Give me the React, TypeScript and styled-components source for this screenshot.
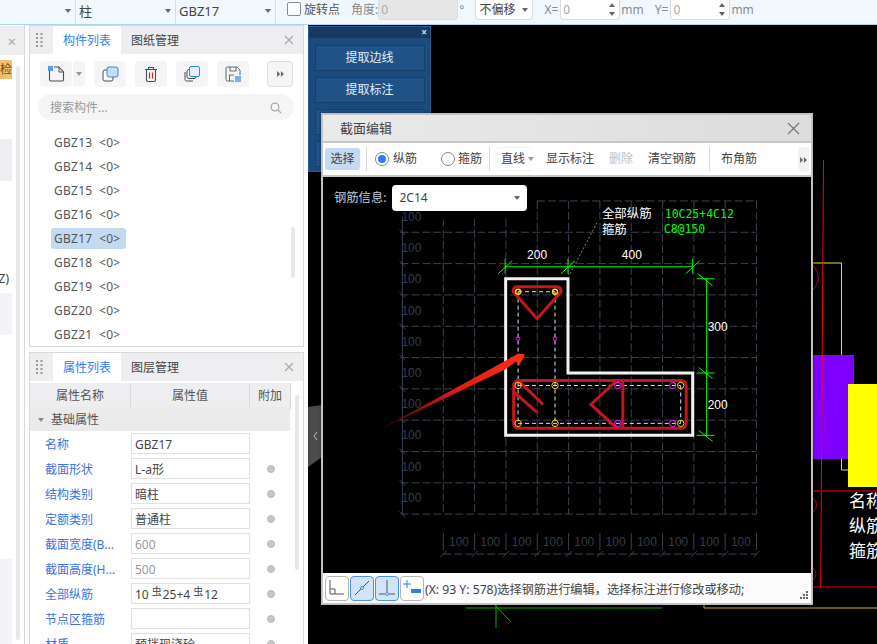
import React from "react";
import styled, { createGlobalStyle } from "styled-components";

const FONT = `"Noto Sans", "Noto Sans CJK SC", sans-serif`;

const Global = createGlobalStyle`
  html, body { margin: 0; padding: 0; background: #fff; overflow: hidden; }
  * { box-sizing: border-box; }
  body { font: 12px/16px ${FONT}; color: #333; }
`;

const Page = styled.div`
  width: 877px; height: 644px; display: flex; flex-direction: column; overflow: hidden;
`;

/* ---------- top bar ---------- */
const TopBar = styled.div`
  height: 25px; flex: none; display: flex; align-items: flex-start; background: #f0f8fd;
  border-bottom: 1px solid #acd4f4; color: #666;
`;
const TopSelect = styled.div<{ $w: number }>`
  width: ${(p) => p.$w}px; height: 24px; display: flex; align-items: center; justify-content: space-between;
  padding: 0 4px 3px 3px; border-right: 1px solid #d5dde3; color: #444; font-size: 13px;
`;
const Caret = styled.i<{ $c?: string }>`
  display: block; width: 0; height: 0; border-left: 3px solid transparent; border-right: 3px solid transparent;
  border-top: 4px solid ${(p) => p.$c || "#666"}; flex: none;
`;
const CheckBox = styled.span`
  width: 14px; height: 14px; margin: 2px 0 0 11px; border: 1px solid #8a8a8a; border-radius: 2px; background: #fff; flex: none;
`;
const TopLabel = styled.span<{ $ml: number; $c?: string }>`
  margin-left: ${(p) => p.$ml}px; line-height: 20px; font-size: 12px; white-space: nowrap; color: ${(p) => p.$c || "#8a8a8a"};
`;
const TopInput = styled.div<{ $w: number; $ml: number; $off?: boolean }>`
  width: ${(p) => p.$w}px; height: 20px; margin-left: ${(p) => p.$ml}px; padding-left: 2px; line-height: 18px; color: #aaa;
  background: ${(p) => (p.$off ? "#e6e6e6" : "#fff")}; border: 1px solid #d8dde2; border-top: 0; border-radius: 0 0 4px 4px;
  display: flex; justify-content: space-between; align-items: center; flex: none; font-size: 12px;
`;
const Spin = styled.span`
  display: flex; flex-direction: column; gap: 5px; margin-right: 4px;
  i:first-child { transform: rotate(180deg); }
`;
const OffsetBox = styled(TopInput)`
  color: #444; padding: 0 4px 0 3px; font-size: 12px;
`;

/* ---------- workspace ---------- */
const Workspace = styled.div`
  flex: 1; display: flex; gap: 4px; min-height: 0;
`;
const Stub = styled.aside`
  width: 25px; flex: none; border-right: 1px solid #d9d9d9; display: flex; flex-direction: column; overflow: hidden; position: relative;
`;
const StubHead = styled.div`
  height: 29px; margin-top: 1px; background: #eeeef0; color: #aaa; font-size: 15px; display: flex; align-items: center; justify-content: flex-end; padding-right: 8px; flex: none;
`;
const StubBand = styled.div<{ $h: number; $mt: number; $bg?: string }>`
  width: 12px; height: ${(p) => p.$h}px; margin-top: ${(p) => p.$mt}px; background: ${(p) => p.$bg || "#f3f4f7"}; flex: none;
  font-size: 12px; line-height: ${(p) => p.$h}px; color: #6b4a10; overflow: hidden; white-space: nowrap; direction: rtl;
`;
const StubZ = styled.div`
  height: 16px; margin-top: 90px; color: #444; font-size: 12px; width: 9px; flex: none; line-height: 16px; white-space: nowrap;
  display: flex; justify-content: flex-end;
`;
const StubScroll = styled.div`
  position: absolute; left: 16px; top: 41px; bottom: 4px; width: 4px; border-radius: 2px; background: #e8e8e8;
`;

const Side = styled.div`
  width: 275px; flex: none; display: flex; flex-direction: column; gap: 5px;
`;
const Panel = styled.section<{ $h?: number }>`
  border: 1px solid #d9d9d9; display: flex; flex-direction: column; position: relative; overflow: hidden;
  ${(p) => (p.$h ? `height:${p.$h}px;flex:none;` : "flex:1;border-bottom:0;")}
`;
const TabBar = styled.div`
  height: 28px; flex: none; background: #eeeef0; display: flex; align-items: stretch; padding-left: 6px; position: relative;
`;
const Tab = styled.div<{ $on?: boolean }>`
  width: 68px; text-align: center; padding-top: 1px; line-height: 28px; font-size: 12px; background: ${(p) => (p.$on ? "#fff" : "transparent")};
  color: ${(p) => (p.$on ? "#2f7ff0" : "#444")};
`;
const Grip = styled.svg`
  width: 7px; height: 15px; margin: 7px 10px 0 0; flex: none;
`;
const CloseX = styled.svg`
  position: absolute; right: 9px; top: 9px; width: 10px; height: 10px;
`;
const Tools = styled.div`
  height: 26px; margin: 7px 0 0 10px; display: flex; align-items: stretch; flex: none;
`;
const ToolBtn = styled.div<{ $w: number; $ml: number; $border?: boolean }>`
  width: ${(p) => p.$w}px; margin-left: ${(p) => p.$ml}px; background: #f5f5f5; border-radius: 4px; display: flex; align-items: center; justify-content: center;
  ${(p) => (p.$border ? "border:1px solid #dedede;" : "")}
`;
const Search = styled.div`
  height: 26px; margin: 7px 9px 0 8px; border-radius: 13px; background: #f5f5f5; color: #999; display: flex; align-items: center; justify-content: space-between;
  padding: 1px 12px 0; font-size: 12px; flex: none;
`;
const List = styled.div`
  margin-top: 10px; display: flex; flex-direction: column; align-items: flex-start; padding-left: 21px; position: relative; flex: 1;
`;
const Item = styled.div<{ $on?: boolean }>`
  height: 24px; display: flex; align-items: center;
  span { display: block; height: 21px; line-height: 21px; padding: 0 6px 0 3px; border-radius: 3px; background: ${(p) => (p.$on ? "#c4daf2" : "transparent")}; color: #555; font-size: 12px; white-space: pre; letter-spacing: .25px; }
`;
const VBar = styled.div<{ $top: number; $h: number; $right: number }>`
  position: absolute; top: ${(p) => p.$top}px; right: ${(p) => p.$right}px; height: ${(p) => p.$h}px; width: 4px; border-radius: 2px; background: #e8e8e8;
`;
const GridHead = styled.div`
  display: grid; grid-template-columns: 101px 119px 41px; height: 24px; margin-top: 2px; flex: none;
`;
const HeadCell = styled.div`
  background: #eeeef0; border-right: 1px solid #d9d9d9; border-bottom: 1px solid #d9d9d9; text-align: center; line-height: 25px; color: #555;
`;
const Group = styled.div`
  width: 260px; height: 24px; background: #ebebeb; display: flex; align-items: center; padding: 2px 0 0 8px; gap: 7px; color: #555; flex: none;
`;
const Row = styled.div`
  display: grid; grid-template-columns: 101px 119px 1fr; height: 25px; align-items: center; flex: none;
  &:first-of-type { margin-top: 1px; }
`;
const RowLabel = styled.div`
  padding: 2px 0 0 15px; color: #3b72e6; white-space: nowrap; overflow: hidden;
`;
const RowValue = styled.div<{ $dim?: boolean }>`
  height: 21px; border: 1px solid #e0e0e0; line-height: 19px; padding: 1px 0 0 3px; color: ${(p) => (p.$dim ? "#9a9a9a" : "#444")}; font-size: 12px; white-space: nowrap;
  sup { font-size: 10px; line-height: 0; vertical-align: 4px; margin: 0 1px 0 3px; }
`;
const Dot = styled.i`
  display: block; width: 8px; height: 8px; margin-left: 17px; border-radius: 50%; background: #c6c6c6; border: 1px solid #bbb;
`;

/* ---------- canvas ---------- */
const Canvas = styled.main`
  flex: 1; background: #000; position: relative; overflow: hidden;
`;
const Backdrop = styled.svg`
  position: absolute; inset: 0; width: 100%; height: 100%;
`;
const BluePanel = styled.div`
  position: absolute; left: 0; top: 1px; width: 123px; height: 146px; background: #1b4a7c; border: 1px solid #27598f; display: flex; flex-direction: column; align-items: center; gap: 6px;
`;
const BlueHead = styled.div`
  align-self: stretch; height: 11px; background: #17385f; color: #cfe0f0; font-size: 10px; line-height: 10px; text-align: right; padding-right: 3px; margin-bottom: 1px; font-weight: 700;
`;
const BlueBtn = styled.div`
  width: 110px; height: 26px; background: #1f5287; border: 1px solid #163f6c; color: #e6edf5; text-align: center; line-height: 24px; font-size: 12px; flex: none;
`;
const Handle = styled.svg`
  position: absolute; left: 0; top: 380px; width: 14px; height: 62px;
`;
const Dialog = styled.div`
  position: absolute; left: 13px; top: 88px; width: 492px; height: 492px; background: #c6c6c6; border: 1px solid #bdbdbd; padding: 1px;
  display: flex; flex-direction: column; box-shadow: 0 0 3px rgba(0,0,0,.4);
`;
const DialogTitle = styled.div`
  height: 26px; flex: none; display: flex; align-items: center; justify-content: space-between; padding: 0 11px 0 17px;
  background: linear-gradient(90deg, #eaeaea, #dcdcdc); font-size: 13px; color: #444;
`;
const DialogTools = styled.div`
  height: 32px; flex: none; background: #fff; margin-top: 2px; display: flex; align-items: center; font-size: 12px; color: #444; position: relative;
`;
const Selected = styled.div`
  margin-left: 2px; width: 35px; height: 22px; background: #c4daf2; border-radius: 3px; text-align: center; line-height: 22px; flex: none;
`;
const Sep = styled.i<{ $ml: number }>`
  display: block; width: 1px; height: 24px; background: #d8d8d8; margin-left: ${(p) => p.$ml}px; flex: none;
`;
const Radio = styled.i<{ $ml: number; $on?: boolean }>`
  display: block; width: 14px; height: 14px; margin-left: ${(p) => p.$ml}px; border-radius: 50%; border: 1px solid #888; flex: none; background: #fff; position: relative;
  ${(p) => (p.$on ? `&::after{content:"";position:absolute;left:2px;top:2px;width:8px;height:8px;border-radius:50%;background:#2f7ff0;}` : "")}
`;
const ToolText = styled.span<{ $ml: number; $off?: boolean }>`
  margin-left: ${(p) => p.$ml}px; color: ${(p) => (p.$off ? "#c0c0c0" : "#444")}; white-space: nowrap; flex: none;
`;
const LineSelect = styled.div`
  margin-left: 7px; width: 36px; height: 24px; display: flex; align-items: center; gap: 3px; padding-left: 3px; border-radius: 3px; border: 1px solid #f2f2f2; border-right: 0; flex: none; white-space: nowrap;
`;
const Overflow = styled.div`
  position: absolute; right: 2px; top: 4px; width: 11px; height: 25px; background: #f2f2f2; border-radius: 3px; display: flex; align-items: center; justify-content: center;
`;
const View = styled.div`
  flex: 1; margin-top: 2px; background: #000; position: relative; min-height: 0;
`;
const Drawing = styled.svg`
  position: absolute; inset: 0; width: 100%; height: 100%;
`;
const ViewHead = styled.div`
  position: absolute; left: 11px; top: 8px; display: flex; align-items: center; gap: 6px; color: #bccbd9; font-size: 12.3px;
`;
const RebarSelect = styled.div`
  width: 135px; height: 26px; background: #fff; border-radius: 4px; display: flex; align-items: center; justify-content: space-between; padding: 0 7px; color: #444; font-size: 12px;
`;
const StatusBar = styled.div`
  height: 30px; flex: none; background: #fcfcfc; display: flex; align-items: center; padding-left: 2px; gap: 1px; color: #444; font-size: 12.2px; position: relative; white-space: nowrap;
  > span { padding-top: 3px; }
`;
const StatusBtn = styled.div<{ $on?: boolean }>`
  width: 24px; height: 25px; border-radius: 4px; flex: none; display: flex; align-items: center; justify-content: center;
  background: ${(p) => (p.$on ? "#d2e4fa" : "#fff")}; border: 1px solid ${(p) => (p.$on ? "#4a94f0" : "#b5b5b5")};
`;
const ResizeGrip = styled.svg`
  position: absolute; right: 3px; bottom: 4px; width: 9px; height: 9px;
`;

/* ---------- icons ---------- */
const X = ({ c = "#aaa" }: { c?: string }) => (
  <CloseX viewBox="0 0 10 10"><path d="M1 1l8 8M9 1L1 9" stroke={c} strokeWidth="1.2" fill="none" /></CloseX>
);
const Dots = () => (
  <Grip viewBox="0 0 7 15">
    {[1, 5, 9, 13].map((y) => [1, 5.5].map((x) => <rect key={`${x}-${y}`} x={x - 1} y={y - 1} width="2" height="2" fill="#999" />))}
  </Grip>
);
const IconNew = () => (
  <svg width="17" height="16" viewBox="0 0 17 16">
    <path d="M1.5 4v9.5a1.5 1.5 0 0 0 1.5 1.5h11a1.5 1.5 0 0 0 1.5-1.5V6L11 1H6" fill="none" stroke="#444f5f" strokeWidth="1.1" />
    <path d="M11 1v5h4.5" fill="none" stroke="#444f5f" strokeWidth="1" />
    <path d="M0 0h5v5H0z" fill="#3b82e8" opacity=".8" />
  </svg>
);
const IconCopy = () => (
  <svg width="17" height="16" viewBox="0 0 17 16">
    <rect x="1" y="4" width="10" height="11" rx="2" fill="#fff" stroke="#444f5f" />
    <rect x="5" y="1" width="11" height="10" rx="2" fill="#c6dcf8" stroke="#3b82e8" />
  </svg>
);
const IconTrash = () => (
  <svg width="14" height="16" viewBox="0 0 14 16">
    <path d="M1 3.5h12M4.5 3.5V1.5h5v2M2.5 3.5V14a1.5 1.5 0 0 0 1.5 1.5h6a1.5 1.5 0 0 0 1.5-1.5V3.5" fill="none" stroke="#444f5f" strokeWidth="1.1" />
    <path d="M5.5 6.5v6M8.5 6.5v6" stroke="#e02020" strokeWidth="1.2" />
  </svg>
);
const IconLayers = () => (
  <svg width="16" height="16" viewBox="0 0 16 16">
    <path d="M1 6v7.5A1.5 1.5 0 0 0 2.5 15H9" fill="none" stroke="#444f5f" />
    <rect x="3" y="3.5" width="9" height="9" rx="2" fill="#fff" stroke="#444f5f" />
    <rect x="5.5" y="0.5" width="10" height="10" rx="1.5" fill="#e3effd" stroke="#3b82e8" />
  </svg>
);
const IconSave = () => (
  <svg width="16" height="16" viewBox="0 0 16 16">
    <path d="M9 15H2.5A1.5 1.5 0 0 1 1 13.5v-11A1.5 1.5 0 0 1 2.5 1h9.5l3 3v5" fill="none" stroke="#4f5a6a" strokeWidth=".9" />
    <path d="M4.5 15V9h4.5M5 1v4h6V1" fill="none" stroke="#4f5a6a" strokeWidth=".9" />
    <path d="M10 10h6v6h-6z" fill="#7fb0ee" />
  </svg>
);
const IconMore = () => (
  <svg width="7" height="6" viewBox="0 0 8 7"><path d="M0 0l3.5 3.5L0 7zM4.5 0L8 3.5 4.5 7z" fill="#666" /></svg>
);
const IconSearch = () => (
  <svg width="12" height="12" viewBox="0 0 12 12"><circle cx="5" cy="5" r="3.8" fill="none" stroke="#aaa" strokeWidth="1.3" /><path d="M8 8l3 3" stroke="#aaa" strokeWidth="1.3" /></svg>
);

const names = ["GBZ13", "GBZ14", "GBZ15", "GBZ16", "GBZ17", "GBZ18", "GBZ19", "GBZ20", "GBZ21"];
type Prop = { l: string; v: React.ReactNode; dim?: boolean; nodot?: boolean };
const props: Prop[] = [
  { l: "名称", v: "GBZ17", nodot: true },
  { l: "截面形状", v: "L-a形" },
  { l: "结构类别", v: "暗柱" },
  { l: "定额类别", v: "普通柱" },
  { l: "截面宽度(B...", v: "600", dim: true },
  { l: "截面高度(H...", v: "500", dim: true },
  { l: "全部纵筋", v: <>10<sup>虫</sup>25+4<sup>虫</sup>12</> },
  { l: "节点区箍筋", v: "" },
  { l: "材质", v: "预拌现浇砼" },
];

const gridX = Array.from({ length: 11 }, (_, i) => 443 + i * 31.4);
const gridY = Array.from({ length: 11 }, (_, i) => 200 + i * 31.4);
const GRID = "#3a4050";
const dash = "8 3";
const RED = "#c8141e";
const GREEN = "#00ff00";

const Section = () => (
  <Drawing viewBox="323 176 488 397">
    <g fill="none" stroke={GRID} strokeDasharray={dash}>
      {gridX.map((x, i) => <path key={x} d={`M${x} ${i < 3 ? 218 : 200}V514`} />)}
      {gridY.map((y, i) => <path key={y} d={`M${i === 0 ? 537 : 400} ${y}H757`} />)}
      <path d="M402 216V514" strokeDasharray="none" />
      <path d="M443 554H757" />
    </g>
    <g stroke={GRID} fill="none">
      {gridX.map((x) => <path key={x} d={`M${x} 533V550M${x - 3} 557L${x + 3} 551`} />)}
      {gridY.map((y) => <path key={y} d={`M399 ${y - 3}L405 ${y + 3}`} />)}
    </g>
    <g fill="#343a4a" fontFamily="Liberation Sans, sans-serif" fontSize="12">
      {[216, 247, 278, 310, 341, 373, 404, 435, 467, 498].map((y) => <text key={y} x="401" y={y + 4}>100</text>)}
      {gridX.slice(0, 10).map((x) => <text key={x} x={x + 15.7} y="546" textAnchor="middle">100</text>)}
    </g>
    <path d="M570 273L597 222" stroke="#888" strokeDasharray="2 2" fill="none" />
    <g stroke={GREEN} fill="none">
      <path d="M505 266H693M505 258V273M568 258V273M693 258V273M498 273L512 260M561 273L575 260M686 273L700 260" />
      <path d="M707 278V435M697 278H715M697 372.5H715M697 435H715M698 273L713 285M699 367L713 378M699 430L713 441" />
    </g>
    <g fill="#fff" fontFamily="Liberation Sans, sans-serif" fontSize="12">
      <text x="537" y="258" textAnchor="middle">200</text>
      <text x="632" y="258" textAnchor="middle">400</text>
      <text x="718" y="330" textAnchor="middle">300</text>
      <text x="718" y="409" textAnchor="middle">200</text>
    </g>
    <g fontFamily="Noto Sans CJK SC, sans-serif" fontSize="12.5" fill="#fff">
      <text x="602" y="217">全部纵筋</text>
      <text x="602" y="233">箍筋</text>
    </g>
    <g fontFamily="DejaVu Sans Mono, monospace" fontSize="11.5" fill={GREEN}>
      <text x="665" y="217">10C25+4C12</text>
      <text x="664" y="232">C8@150</text>
    </g>
    <path d="M505.5 278H568V372.5H693V435H505.5Z" fill="none" stroke="#f2f2f2" strokeWidth="3" />
    <g fill="none" stroke="#d5e4f5" strokeDasharray="4 3">
      <path d="M518 291H555M518 291V423M555 291V423M518 385H681M518 423H681M681 385V423" />
    </g>
    <g fill="none" stroke={RED} strokeWidth="3">
      <path d="M517 286H557Q561 286 561 291L537 318L513 291Q513 286 517 286Z" />
      <rect x="513.5" y="380" width="173" height="48" rx="5" />
      <path d="M623 380V428M617 380L591 404L617 428M518 380L543 404M513 391L537 412" />
    </g>
    <g fill="none" stroke="#ffd21e">
      {[[518, 385], [555, 385], [518, 423], [555, 423], [681, 385], [681, 423]].map(([x, y]) => <circle key={`${x}${y}`} cx={x} cy={y} r="3.2" />)}
      {[[518, 291], [555, 291]].map(([x, y]) => <circle key={x} cx={x} cy={y} r="2.5" strokeWidth="1.5" />)}
    </g>
    <g fill="none" stroke="#ff1aff">
      {[[618, 385], [618, 423], [673, 385], [673, 423]].map(([x, y]) => <circle key={`${x}${y}`} cx={x} cy={y} r="3.2" />)}
      {[[518, 338], [555, 338]].map(([x, y]) => <circle key={x} cx={x} cy={y} r="1.8" />)}
    </g>
    <defs>
      <linearGradient id="arrow" x1="380" y1="429" x2="525" y2="354" gradientUnits="userSpaceOnUse">
        <stop offset="0" stopColor="#3a0505" />
        <stop offset=".5" stopColor="#d81c10" />
        <stop offset="1" stopColor="#ff2c18" />
      </linearGradient>
    </defs>
    <path d="M380 429L513 356L518 353L525 354L519 365L516 361L505 369Z" fill="url(#arrow)" />
  </Drawing>
);

export default function App() {
  return (
    <Page>
      <Global />
      <TopBar>
        <TopSelect $w={76}><span /><Caret /></TopSelect>
        <TopSelect $w={100}><span>柱</span><Caret /></TopSelect>
        <TopSelect $w={100}><span>GBZ17</span><Caret /></TopSelect>
        <CheckBox />
        <TopLabel $ml={3} $c="#555">旋转点</TopLabel>
        <TopLabel $ml={11}>角度:</TopLabel>
        <TopInput $w={80} $ml={0} $off>0</TopInput>
        <TopLabel $ml={1}>°</TopLabel>
        <OffsetBox $w={58} $ml={11}>不偏移<Caret /></OffsetBox>
        <TopLabel $ml={11}>X=</TopLabel>
        <TopInput $w={60} $ml={2}>0<Spin><Caret /><Caret /></Spin></TopInput>
        <TopLabel $ml={1}>mm</TopLabel>
        <TopLabel $ml={11}>Y=</TopLabel>
        <TopInput $w={60} $ml={2}>0<Spin><Caret /><Caret /></Spin></TopInput>
        <TopLabel $ml={1}>mm</TopLabel>
      </TopBar>
      <Workspace>
        <Stub>
          <StubHead>×</StubHead>
          <StubBand $h={19} $mt={5} $bg="#f0c070">检</StubBand>
          <StubBand $h={42} $mt={60} $bg="#eeeef2" />
          <StubZ>Z)</StubZ>
          <StubBand $h={42} $mt={6} />
          <StubBand $h={90} $mt={224} />
          <StubScroll />
        </Stub>
        <Side>
          <Panel $h={322}>
            <TabBar>
              <Dots />
              <Tab $on>构件列表</Tab>
              <Tab>图纸管理</Tab>
              <X />
            </TabBar>
            <Tools>
              <ToolBtn $w={32} $ml={0}><IconNew /></ToolBtn>
              <ToolBtn $w={12} $ml={1}><Caret $c="#999" /></ToolBtn>
              <ToolBtn $w={32} $ml={9}><IconCopy /></ToolBtn>
              <ToolBtn $w={32} $ml={9}><IconTrash /></ToolBtn>
              <ToolBtn $w={32} $ml={9}><IconLayers /></ToolBtn>
              <ToolBtn $w={32} $ml={9}><IconSave /></ToolBtn>
              <ToolBtn $w={26} $ml={18} $border><IconMore /></ToolBtn>
            </Tools>
            <Search>搜索构件...<IconSearch /></Search>
            <List>
              {names.map((n) => (
                <Item key={n} $on={n === "GBZ17"}><span>{n}  {"<0>"}</span></Item>
              ))}
              <VBar $top={97} $h={51} $right={8} />
            </List>
          </Panel>
          <Panel>
            <TabBar>
              <Dots />
              <Tab $on>属性列表</Tab>
              <Tab>图层管理</Tab>
              <X />
            </TabBar>
            <GridHead>
              <HeadCell>属性名称</HeadCell>
              <HeadCell>属性值</HeadCell>
              <HeadCell>附加</HeadCell>
            </GridHead>
            <Group><Caret $c="#888" />基础属性</Group>
            {props.map((p) => (
              <Row key={p.l}>
                <RowLabel>{p.l}</RowLabel>
                <RowValue $dim={p.dim}>{p.v}</RowValue>
                {p.nodot ? <span /> : <Dot />}
              </Row>
            ))}
            <VBar $top={42} $h={175} $right={4} />
          </Panel>
        </Side>
        <Canvas>
          <Backdrop viewBox="308 25 569 619">
            <path d="M813 263H841.5V470H848" fill="none" stroke="#e6e61e" />
            <path d="M813 355H854V459H813Z" fill="#8000ff" />
            <path d="M848 384H877V487H848Z" fill="#ffff00" />
            <path d="M823.5 160L820.7 587" stroke="#ff0000" fill="none" />
            <path d="M813 491H877" stroke="#800000" strokeWidth="2" />
            <path d="M813 587H877" stroke="#e60000" fill="none" />
            <path d="M813 265Q824 277 813 290M813 498Q820 505 813 512M813 568Q819 574 813 580" stroke="#c00000" fill="none" />
            <path d="M466 608H662M496 605V628M495 605L511 622" stroke="#00b400" fill="none" />
            <path d="M704 604V608H877" stroke="#c8b400" fill="none" />
            <g fill="#fff" fontFamily="Noto Sans CJK SC, sans-serif" fontSize="17">
              <text x="849" y="507">名称</text>
              <text x="849" y="532">纵筋</text>
              <text x="849" y="557">箍筋</text>
            </g>
          </Backdrop>
          <BluePanel>
            <BlueHead>×</BlueHead>
            <BlueBtn>提取边线</BlueBtn>
            <BlueBtn>提取标注</BlueBtn>
            <BlueBtn />
            <BlueBtn />
          </BluePanel>
          <Handle viewBox="0 0 14 62">
            <path d="M0 2L14 0V52L0 62Z" fill="#4c4c4c" />
            <path d="M9 27l-3 4 3 4" fill="none" stroke="#bbb" />
          </Handle>
          <Dialog>
            <DialogTitle>
              截面编辑
              <svg width="13" height="13" viewBox="0 0 13 13"><path d="M1 1l11 11M12 1L1 12" stroke="#777" strokeWidth="1.2" /></svg>
            </DialogTitle>
            <DialogTools>
              <Selected>选择</Selected>
              <Sep $ml={6} />
              <Radio $ml={8} $on />
              <ToolText $ml={4}>纵筋</ToolText>
              <Radio $ml={24} />
              <ToolText $ml={3}>箍筋</ToolText>
              <Sep $ml={7} />
              <LineSelect>直线<Caret $c="#999" /></LineSelect>
              <ToolText $ml={13}>显示标注</ToolText>
              <ToolText $ml={15} $off>删除</ToolText>
              <ToolText $ml={15}>清空钢筋</ToolText>
              <Sep $ml={13} />
              <ToolText $ml={11}>布角筋</ToolText>
              <Overflow><IconMore /></Overflow>
            </DialogTools>
            <View>
              <Section />
              <ViewHead>
                钢筋信息:
                <RebarSelect>2C14<Caret /></RebarSelect>
              </ViewHead>
            </View>
            <StatusBar>
              <StatusBtn>
                <svg width="18" height="18" viewBox="0 0 18 18"><path d="M2 1v14h14M2 10h5v5" fill="none" stroke="#555" /></svg>
              </StatusBtn>
              <StatusBtn $on>
                <svg width="18" height="18" viewBox="0 0 18 18"><path d="M2 16L16 2" stroke="#555" fill="none" /><circle cx="9" cy="9" r="1.5" fill="#d2e4fa" stroke="#4a94f0" /></svg>
              </StatusBtn>
              <StatusBtn $on>
                <svg width="18" height="18" viewBox="0 0 18 18"><path d="M9 1v14M1 15h16" stroke="#555" fill="none" /><circle cx="9" cy="15" r="1.5" fill="#d2e4fa" stroke="#4a94f0" /></svg>
              </StatusBtn>
              <StatusBtn>
                <svg width="20" height="18" viewBox="0 0 20 18"><path d="M5 1v8M1 5h8" stroke="#2f7ff0" fill="none" /><rect x="9" y="10" width="10" height="4" fill="#2f7ff0" /></svg>
              </StatusBtn>
              <span>(X: 93 Y: 578)选择钢筋进行编辑，选择标注进行修改或移动;</span>
              <ResizeGrip viewBox="0 0 9 9">
                {[[7, 1], [4, 4], [7, 4], [1, 7], [4, 7], [7, 7]].map(([x, y]) => <rect key={`${x}${y}`} x={x} y={y} width="2" height="2" fill="#666" />)}
              </ResizeGrip>
            </StatusBar>
          </Dialog>
        </Canvas>
      </Workspace>
    </Page>
  );
}
